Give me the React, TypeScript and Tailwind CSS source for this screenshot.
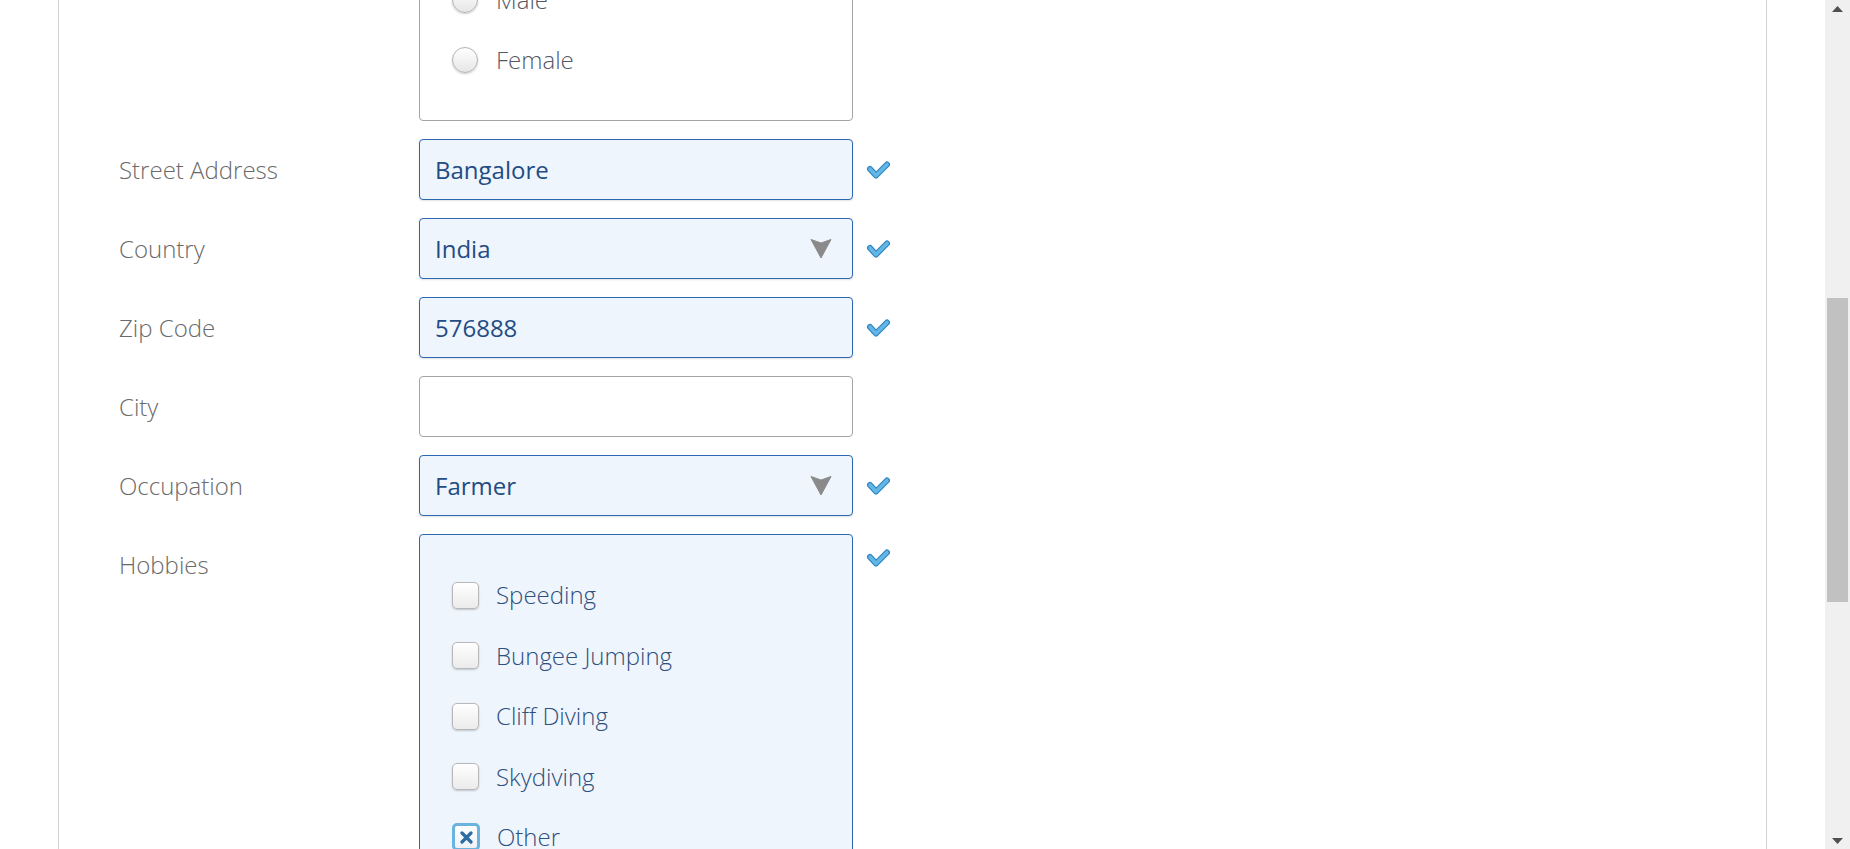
import React from 'react'

type Field = { label: string; value: string; kind: 'text' | 'select'; valid: boolean }

const fields: Field[] = [
  { label: 'Street Address', value: 'Bangalore', kind: 'text', valid: true },
  { label: 'Country', value: 'India', kind: 'select', valid: true },
  { label: 'Zip Code', value: '576888', kind: 'text', valid: true },
  { label: 'City', value: '', kind: 'text', valid: false },
  { label: 'Occupation', value: 'Farmer', kind: 'select', valid: true },
]

const hobbies = ['Speeding', 'Bungee Jumping', 'Cliff Diving', 'Skydiving', 'Other']

function ValidMark() {
  return (
    <svg width="24" height="20" viewBox="0 0 24 20" className="shrink-0">
      <path d="M4 9 L10 15.5 L21 4.5" fill="none" stroke="#2f86c2" strokeWidth="6" strokeLinecap="round" strokeLinejoin="round" />
      <path d="M4 9 L10 15.5 L21 4.5" fill="none" stroke="#63b6e6" strokeWidth="3.6" strokeLinecap="round" strokeLinejoin="round" />
    </svg>
  )
}

function SelectArrow() {
  return (
    <svg width="22" height="21" viewBox="0 0 22 21">
      <path d="M1 1.5 L11 5 L21 1.5 L11 20 Z" fill="#8a8a8a" stroke="#8a8a8a" strokeWidth="1" strokeLinejoin="round" />
    </svg>
  )
}

function Radio() {
  return (
    <span className="h-[26px] w-[26px] shrink-0 rounded-full border border-[#b3b3b3] bg-gradient-to-b from-white to-[#e6e6e6] shadow-[0_1px_2px_rgba(0,0,0,0.2)]" />
  )
}

function Checkbox({ checked }: { checked?: boolean }) {
  if (checked) {
    return (
      <span className="flex h-[28px] w-[28px] shrink-0 items-center justify-center rounded-[5px] border-[3px] border-[#6ab4df] bg-gradient-to-b from-white to-[#eef3f8]">
        <svg width="13" height="13" viewBox="0 0 13 13">
          <path d="M2 2 L11 11 M11 2 L2 11" stroke="#2c6ca4" strokeWidth="3.2" strokeLinecap="round" />
        </svg>
      </span>
    )
  }
  return (
    <span className="h-[27px] w-[27px] shrink-0 rounded-[5px] border border-[#b8b8b8] bg-gradient-to-b from-white to-[#ebebeb] shadow-[0_1px_2px_rgba(0,0,0,0.2)]" />
  )
}

function FieldRow({ f }: { f: Field }) {
  const filled = f.value !== ''
  return (
    <div className="flex items-center">
      <label className="w-[299px] shrink-0 -translate-x-px text-[24px] font-light text-[#6a6a6a]">{f.label}</label>
      {f.kind === 'text' ? (
        <input
          readOnly
          defaultValue={f.value}
          className={
            filled
              ? 'h-[61px] w-[434px] rounded-[4px] border border-[#2c67b1] bg-[#eef5fd] pl-[15px] text-[24px] text-[#234c84] shadow-[0_1px_2px_rgba(0,0,0,0.12)] outline-none'
              : 'h-[61px] w-[434px] rounded-[4px] border border-[#a4a4a4] bg-white pl-[15px] text-[24px] text-[#234c84] outline-none'
          }
        />
      ) : (
        <div className="flex h-[61px] w-[434px] items-center justify-between rounded-[4px] border border-[#2c67b1] bg-[#eef5fd] pl-[15px] pr-[20px] text-[24px] text-[#234c84] shadow-[0_1px_2px_rgba(0,0,0,0.12)]">
          <span>{f.value}</span>
          <SelectArrow />
        </div>
      )}
      <div className="ml-[13px] w-[24px]">{f.valid && <ValidMark />}</div>
    </div>
  )
}

export default function App() {
  return (
    <div className="flex h-[849px] w-[1850px] overflow-hidden bg-white font-['Open_Sans','Liberation_Sans',sans-serif]">
      <div className="flex flex-1 px-[58px]">
        <div className="flex-1 border-x border-[#d2d2d2] pl-[61px]">
          <div className="-mt-[61px] flex flex-col gap-[18px]">
            {/* Gender */}
            <div className="flex items-start">
              <div className="w-[299px] shrink-0" />
              <div className="flex w-[434px] flex-col rounded-[4px] border border-[#a4a4a4] bg-white py-[30px] pl-[32px]">
                {['Male', 'Female'].map((g) => (
                  <div key={g} className="flex h-[60px] items-center gap-[18px]">
                    <Radio />
                    <span className="text-[24px] font-light text-[#555866]">{g}</span>
                  </div>
                ))}
              </div>
            </div>

            {fields.map((f) => (
              <FieldRow key={f.label} f={f} />
            ))}

            {/* Hobbies */}
            <div className="flex items-start">
              <label className="flex h-[61px] w-[299px] shrink-0 -translate-x-px items-center text-[24px] font-light text-[#6a6a6a]">Hobbies</label>
              <div className="flex w-[434px] flex-col rounded-[4px] border border-[#2c67b1] bg-[#eef5fd] pb-[30px] pl-[32px] pt-[30px]">
                {hobbies.map((h) => (
                  <div key={h} className="flex h-[60.5px] items-center gap-[17px]">
                    <Checkbox checked={h === 'Other'} />
                    <span className="text-[24px] font-light text-[#2f4f7c]">{h}</span>
                  </div>
                ))}
              </div>
              <div className="ml-[13px] mt-[14px] w-[24px]">
                <ValidMark />
              </div>
            </div>
          </div>
        </div>
      </div>

      {/* scrollbar */}
      <div className="flex w-[25px] flex-col bg-[#f0f0f0]">
        <div className="flex h-[17px] items-center justify-center">
          <svg width="11" height="6" viewBox="0 0 11 6">
            <path d="M0 6 L5.5 0 L11 6 Z" fill="#505050" />
          </svg>
        </div>
        <div className="flex-1 px-[2px] pt-[281px]">
          <div className="h-[304px] bg-[#c1c1c1]" />
        </div>
        <div className="flex h-[17px] items-center justify-center">
          <svg width="11" height="6" viewBox="0 0 11 6">
            <path d="M0 0 L11 0 L5.5 6 Z" fill="#505050" />
          </svg>
        </div>
      </div>
    </div>
  )
}
